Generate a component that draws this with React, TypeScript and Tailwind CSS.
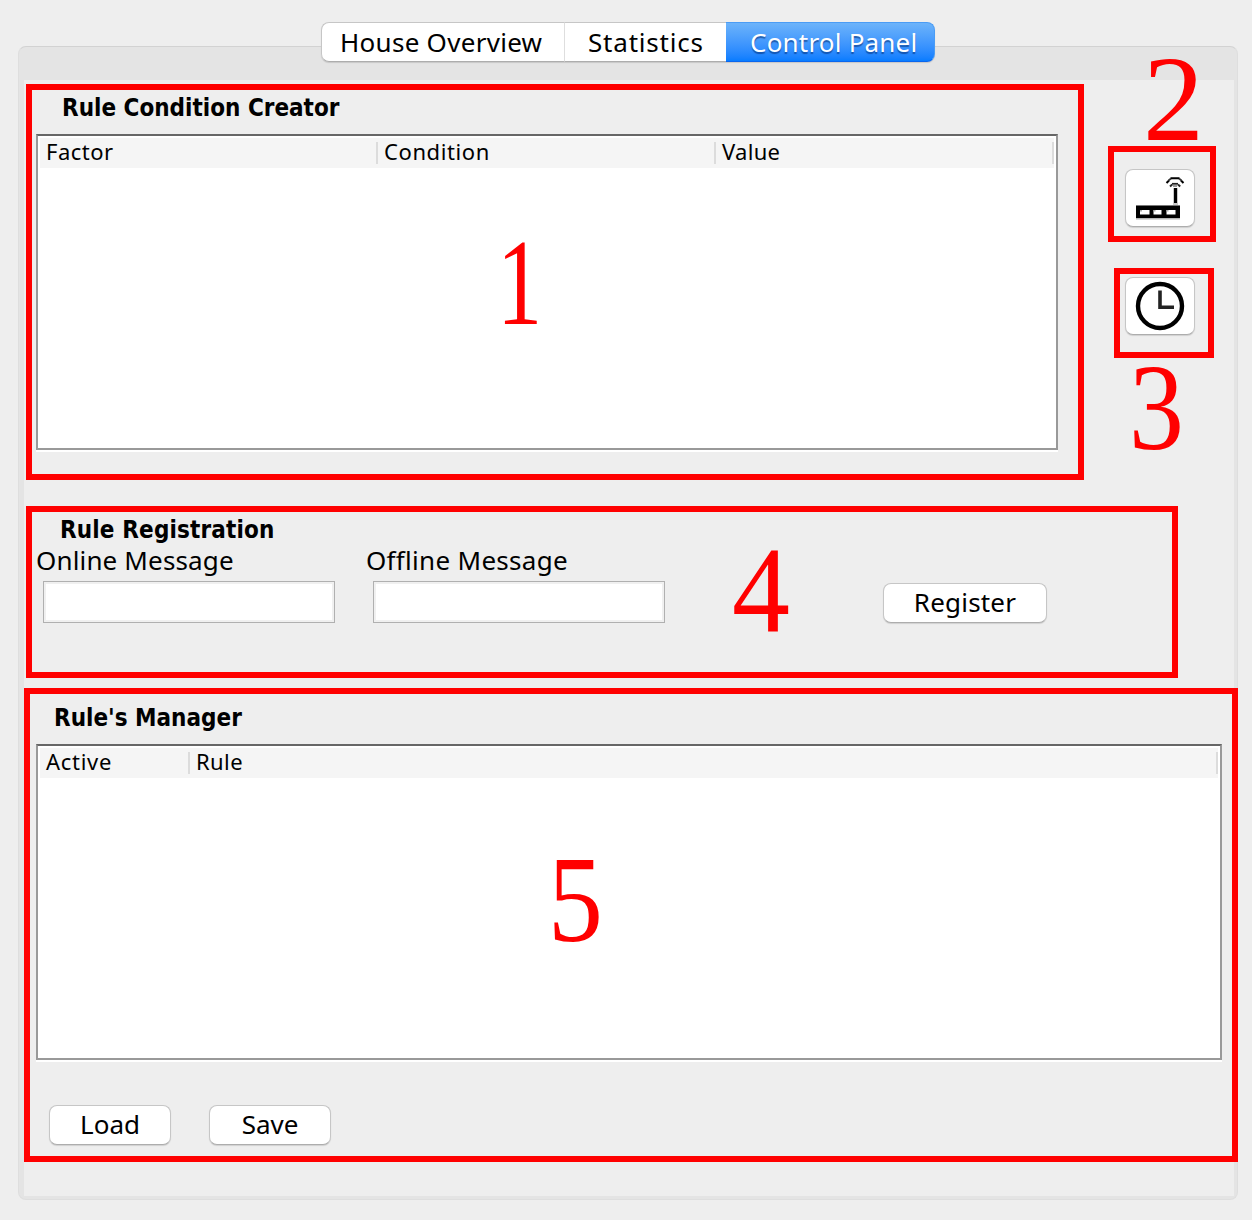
import type { ReactNode } from "react";

function Frame({ className, children }: { className: string; children: ReactNode }) {
  return <section className={`relative border-[6px] border-[#ff0000] ${className}`}>{children}</section>;
}

function Heading({ className, children }: { className: string; children: ReactNode }) {
  return (
    <h2 className={`font-['DejaVu_Sans_Condensed','DejaVu_Sans',sans-serif] text-[24px] font-bold leading-[34px] [font-stretch:condensed] ${className}`}>
      {children}
    </h2>
  );
}

function Marker({ className, children }: { className: string; children: ReactNode }) {
  return (
    <span
      className={`pointer-events-none absolute z-10 origin-left font-['Liberation_Serif',serif] text-[122px] leading-[122px] text-[#ff0000] ${className}`}
    >
      {children}
    </span>
  );
}

function PushButton({ className, children, label }: { className: string; children: ReactNode; label?: string }) {
  return (
    <button
      aria-label={label}
      className={`flex items-center justify-center rounded-[8px] border border-[#c6c6c6] border-b-[#adadad] bg-white text-[26px] leading-[36px] shadow-[0_1px_1px_rgba(0,0,0,0.13)] ${className}`}
    >
      {children}
    </button>
  );
}

function Table({ className, columns }: { className: string; columns: { name: string; cell: string }[] }) {
  return (
    <div
      className={`h-[316px] border-2 border-[#999999] border-t-[#666666] bg-white p-[2px] shadow-[0_2px_0_#ffffff] ${className}`}
    >
      <div className="flex h-[30px] bg-[#f5f5f5]">
        {columns.map((c) => (
          <div key={c.name} className={`flex items-center justify-between text-[22px] leading-[26px] ${c.cell}`}>
            <span className="-mt-[4px]">{c.name}</span>
            <span className="h-[22px] w-[2px] bg-[#dcdcdc]" />
          </div>
        ))}
      </div>
    </div>
  );
}

function RouterIcon() {
  return (
    <svg width="50" height="44" viewBox="0 0 50 44" fill="none">
      <path d="M1 42h44v1.5H1z" fill="#b5b5b5" />
      <path d="M1 30h44v12H1z" fill="#000" />
      <path d="M1 29h44v1H1z" fill="#777" />
      <path d="M5 34h9.500v4.500H5zM18.500 34h8v4.500h-8zM31.500 34h9v4.500h-9z" fill="#fff" />
      <path d="M5 34h2v1.500h-2zM18.500 34h2v1.500h-2zM31.500 34h2v1.500h-2z" fill="#aaa" />
      <path d="M38 12h5v17h-5z" fill="#c8c8c8" />
      <path d="M39 12h3v15h-3z" fill="#000" />
      <path d="M31.500 7L34 4.500M35.500 2.300h9M46 4.500L48.500 7" stroke="#000" strokeWidth="2" />
      <path d="M33.500 4.500l2.500-2M44 2.500l2.500 2" stroke="#333" strokeWidth="1.800" />
      <path d="M37 7.800h6" stroke="#222" strokeWidth="1.800" />
      <path d="M35 10.500l2.200-2M43 8.500l2.200 2" stroke="#222" strokeWidth="2" />
      <path d="M38 10h4" stroke="#777" strokeWidth="1.500" />
    </svg>
  );
}

function ClockIcon() {
  return (
    <svg width="50" height="50" viewBox="0 0 50 50" fill="none">
      <circle cx="25" cy="25" r="22" stroke="#000" strokeWidth="4.400" />
      <path d="M25 9.500V26.200H39" stroke="#222" strokeWidth="3.600" />
    </svg>
  );
}

export default function App() {
  return (
    <main className="relative flex h-[1220px] w-[1252px] flex-col bg-[#eeeeee] pt-[22px] font-['Noto_Sans',sans-serif] text-black">
      <nav className="relative z-10 ml-[321px] flex h-[40px] w-[614px] rounded-[8px] text-[26px] leading-[36px] shadow-[0_1px_1px_rgba(0,0,0,0.13)]">
        <button className="w-[243px] whitespace-nowrap rounded-l-[8px] border border-r-0 border-[#c6c6c6] border-b-[#adadad] bg-white pl-[18px] text-left tracking-[0.28px]">
          House Overview
        </button>
        <button className="w-[162px] border border-r-0 border-[#c6c6c6] border-b-[#adadad] border-l-[#dedede] bg-white pl-[23px] text-left tracking-[0.8px]">
          Statistics
        </button>
        <button className="w-[209px] rounded-r-[8px] border border-l-0 border-[#4a9cf5] border-b-[#0a66ee] bg-linear-to-b from-[#6cb3fa] to-[#067cff] pl-[24px] text-left tracking-[0.2px] text-white [text-shadow:0_2px_1px_rgba(0,40,110,0.55)]">
          Control Panel
        </button>
      </nav>

      <div className="-mt-[16px] ml-[18px] h-[1154px] w-[1220px] rounded-[8px] border border-[#dedede] border-t-[#d2d2d2] bg-[#e4e4e4] pl-[5px] pr-[3px] pt-[33px]">
        <div className="h-[1116px] w-[1210px] bg-[#eeeeee] pt-[4px]">
          <div className="flex">
            <Frame className="ml-[2px] h-[396px] w-[1058px] pl-[4px]">
              <Heading className="pl-[26px] pt-px">Rule Condition Creator</Heading>
              <Table
                className="mt-[9px] w-[1022px]"
                columns={[
                  { name: "Factor", cell: "w-[338px] pl-[6px] tracking-[0.5px]" },
                  { name: "Condition", cell: "w-[338px] pl-[6px] tracking-[0.6px]" },
                  { name: "Value", cell: "w-[338px] pl-[6px] tracking-[0.3px]" },
                ]}
              />
              <Marker className="left-[465px] top-[132px] scale-x-[0.74]">1</Marker>
            </Frame>
            <aside className="relative ml-[24px] flex flex-col pt-[62px]">
              <Marker className="-top-[46px] left-[35px]">2</Marker>
              <Frame className="h-[96px] w-[108px] pl-[11px] pt-[17px]">
                <PushButton label="Router" className="h-[58px] w-[70px]">
                  <RouterIcon />
                </PushButton>
              </Frame>
              <Frame className="ml-[6px] mt-[26px] h-[90px] w-[100px] pl-[5px] pt-[3px]">
                <PushButton label="Clock" className="h-[58px] w-[70px]">
                  <ClockIcon />
                </PushButton>
              </Frame>
              <Marker className="left-[21px] top-[263px] scale-x-[0.9]">3</Marker>
            </aside>
          </div>

          <Frame className="ml-[2px] mt-[26px] h-[172px] w-[1152px] pl-[4px]">
            <Heading className="-mb-px pl-[24px] pt-px tracking-[0.15px]">Rule Registration</Heading>
            <div className="flex text-[26px] leading-[36px]">
              <label className="flex w-[330px] flex-col">
                <span className="-mt-[4px] tracking-[0.15px]">Online Message</span>
                <input className="ml-[7px] mt-[3px] h-[42px] w-[292px] border border-[#b0b0b0] bg-white shadow-[inset_0_0_0_2px_#f0f0f0]" />
              </label>
              <label className="flex w-[330px] flex-col">
                <span className="-mt-[4px] tracking-[0.3px]">Offline Message</span>
                <input className="ml-[7px] mt-[3px] h-[42px] w-[292px] border border-[#b0b0b0] bg-white shadow-[inset_0_0_0_2px_#f0f0f0]" />
              </label>
              <PushButton className="ml-[187px] mt-[37px] h-[40px] w-[164px] pb-[2px] tracking-[0.2px]">Register</PushButton>
            </div>
            <Marker className="left-[700px] top-[18px] scale-x-[0.95]">4</Marker>
          </Frame>

          <Frame className="mt-[10px] h-[474px] w-[1214px] pl-[6px]">
            <Heading className="pl-[18px] pt-[7px]">Rule&apos;s Manager</Heading>
            <Table
              className="mt-[9px] w-[1186px]"
              columns={[
                { name: "Active", cell: "w-[150px] pl-[6px] tracking-[0.7px]" },
                { name: "Rule", cell: "w-[1028px] pl-[6px] tracking-[0.4px]" },
              ]}
            />
            <div className="flex gap-[38px] pl-[13px] pt-[45px]">
              <PushButton className="h-[40px] w-[122px] pb-[2px]">Load</PushButton>
              <PushButton className="h-[40px] w-[122px] pb-[2px]">Save</PushButton>
            </div>
            <Marker className="left-[518px] top-[145px] scale-x-[0.9]">5</Marker>
          </Frame>
        </div>
      </div>
    </main>
  );
}
